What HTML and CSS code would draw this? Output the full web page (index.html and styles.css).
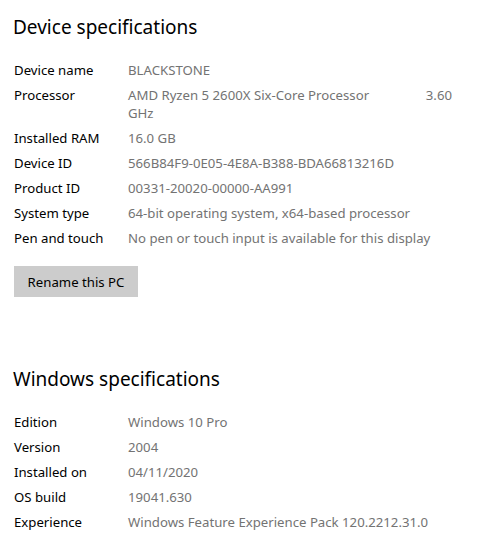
FILE: index.html
```html
<!DOCTYPE html>
<html lang="en">
<head>
  <meta charset="UTF-8" />
  <title>About</title>
  <link rel="stylesheet" href="styles.css">
</head>
<body>
  <section class="specs">
    <h2>Device specifications</h2>
    <dl class="spec-list">
      <div class="spec-row"><dt>Device name</dt><dd>BLACKSTONE</dd></div>
      <div class="spec-row">
        <dt>Processor</dt>
        <dd><span class="cpu-line"><span>AMD Ryzen 5 2600X Six-Core Processor</span><span>3.60</span></span>GHz</dd>
      </div>
      <div class="spec-row"><dt>Installed RAM</dt><dd>16.0 GB</dd></div>
      <div class="spec-row"><dt>Device ID</dt><dd>566B84F9-0E05-4E8A-B388-BDA66813216D</dd></div>
      <div class="spec-row"><dt>Product ID</dt><dd>00331-20020-00000-AA991</dd></div>
      <div class="spec-row"><dt>System type</dt><dd>64-bit operating system, x64-based processor</dd></div>
      <div class="spec-row"><dt>Pen and touch</dt><dd>No pen or touch input is available for this display</dd></div>
    </dl>
    <button class="rename-btn">Rename this PC</button>
  </section>

  <section class="specs windows">
    <h2>Windows specifications</h2>
    <dl class="spec-list">
      <div class="spec-row"><dt>Edition</dt><dd>Windows 10 Pro</dd></div>
      <div class="spec-row"><dt>Version</dt><dd>2004</dd></div>
      <div class="spec-row"><dt>Installed on</dt><dd>04/11/2020</dd></div>
      <div class="spec-row"><dt>OS build</dt><dd>19041.630</dd></div>
      <div class="spec-row"><dt>Experience</dt><dd>Windows Feature Experience Pack 120.2212.31.0</dd></div>
    </dl>
  </section>
</body>
</html>
```
FILE: styles.css
```css
body {
  font-family: "Noto Sans", "Open Sans", sans-serif;
  background-color: #ffffff;
  color: #000000;
  margin: 0;
  padding: 0 14px;
}

.specs h2 {
  font-size: 19px;
  font-weight: 400;
  line-height: 28px;
  margin: 13px 0 0 -1px;
}

.spec-list {
  margin: 20px 0 0;
  font-size: 13.2px;
}

.spec-row {
  display: grid;
  grid-template-columns: 114px 324px;
  line-height: 18px;
  margin-bottom: 7px;
}
.spec-row dt {
  margin: 0;
}
.spec-row dd {
  margin: 0;
  color: #737373;
}

.cpu-line {
  display: flex;
  justify-content: space-between;
}

.rename-btn {
  display: block;
  margin-top: 19px;
  width: 124px;
  height: 31px;
  background-color: #cccccc;
  border: none;
  padding: 0;
  font-family: inherit;
  font-size: 13.2px;
  color: #000000;
  cursor: pointer;
}

.windows h2 {
  margin-top: 68px;
}
```
